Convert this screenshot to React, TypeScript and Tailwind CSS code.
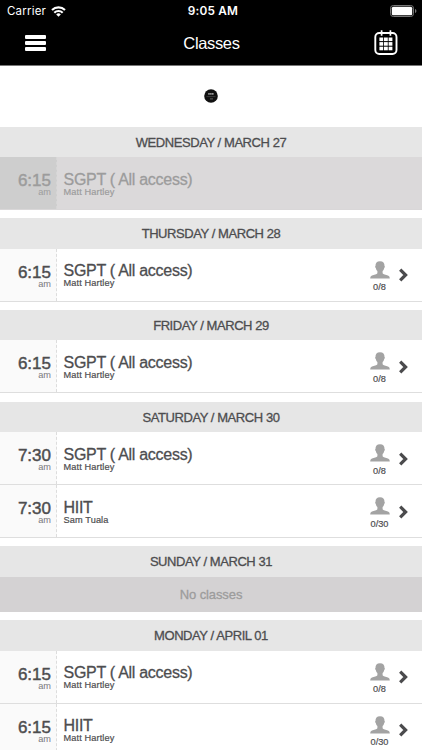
import { clsx } from "clsx";

type ClassItem = {
  time: string;
  name: string;
  coach: string;
  booked?: string;
  past?: boolean;
};

type Day = {
  label: string;
  classes: ClassItem[];
};

const DAYS: Day[] = [
  {
    label: "WEDNESDAY / MARCH 27",
    classes: [{ time: "6:15", name: "SGPT ( All access)", coach: "Matt Hartley", past: true }],
  },
  {
    label: "THURSDAY / MARCH 28",
    classes: [{ time: "6:15", name: "SGPT ( All access)", coach: "Matt Hartley", booked: "0/8" }],
  },
  {
    label: "FRIDAY / MARCH 29",
    classes: [{ time: "6:15", name: "SGPT ( All access)", coach: "Matt Hartley", booked: "0/8" }],
  },
  {
    label: "SATURDAY / MARCH 30",
    classes: [
      { time: "7:30", name: "SGPT ( All access)", coach: "Matt Hartley", booked: "0/8" },
      { time: "7:30", name: "HIIT", coach: "Sam Tuala", booked: "0/30" },
    ],
  },
  { label: "SUNDAY / MARCH 31", classes: [] },
  {
    label: "MONDAY / APRIL 01",
    classes: [
      { time: "6:15", name: "SGPT ( All access)", coach: "Matt Hartley", booked: "0/8" },
      { time: "6:15", name: "HIIT", coach: "Matt Hartley", booked: "0/30" },
    ],
  },
];

function WifiIcon() {
  return (
    <svg width="15" height="11" viewBox="0 0 15 11" fill="none" stroke="#fff" strokeWidth="2.1">
      <path d="M1 4.1a9.2 9.2 0 0 1 13 0" />
      <path d="M3.3 6.7a5.9 5.9 0 0 1 8.4 0" />
      <path d="M7.5 10.7 5.2 8.4a3.3 3.3 0 0 1 4.6 0z" fill="#fff" stroke="none" />
    </svg>
  );
}

function BatteryIcon() {
  return (
    <svg width="27" height="12" viewBox="0 0 27 12">
      <rect x="0.5" y="0.5" width="23" height="11" rx="2.8" fill="none" stroke="#777" />
      <rect x="1.8" y="1.8" width="20.4" height="8.4" rx="1.5" fill="#fff" />
      <path d="M25 4v4c.8-.3 1.4-1.1 1.4-2S25.8 4.3 25 4z" fill="#777" />
    </svg>
  );
}

function CalendarIcon() {
  return (
    <svg width="24" height="26" viewBox="0 0 24 26">
      <rect x="1.3" y="3" width="21.2" height="21" rx="4" fill="none" stroke="#fff" strokeWidth="1.9" />
      <path d="M7.6 0.3v5.4M16.4 0.3v5.4" stroke="#fff" strokeWidth="1.7" />
      {[7.5, 12.1, 16.7].map((y) =>
        [5.4, 10, 14.6].map((x) => (
          <rect key={`${x}-${y}`} x={x} y={y} width="3.8" height="3.6" fill="#fff" />
        ))
      )}
    </svg>
  );
}

function PersonIcon() {
  return (
    <svg width="20" height="18" viewBox="0 0 20 18" fill="#a3a3a3">
      <path d="M10 .3C6.8.3 5.4 2.200 5.500 4.900c-.6.1-.4 1.700.3 2.100.2 1.500.8 2.400 1.600 3.100v2.100c-.5 1.300-3.400 1.600-5.400 2.300C.8 15 .3 15.900.2 17.500h19.600c-.1-1.600-.6-2.500-1.900-3-2-.7-4.800-1-5.300-2.300v-2.100c.8-.7 1.400-1.600 1.600-3.100.7-.4.9-2 .3-2.100C14.600 2.200 13.200.3 10 .3z" />
    </svg>
  );
}

function ChevronIcon() {
  return (
    <svg width="10" height="14" viewBox="0 0 10 14" fill="none" stroke="#4b4b4d" strokeWidth="3.2">
      <path d="M1.2 1.6 6.6 7l-5.4 5.4" />
    </svg>
  );
}

function StudioLogo() {
  return (
    <svg width="14" height="14" viewBox="0 0 14 14">
      <circle cx="7" cy="7" r="6.8" fill="#111" />
      <path d="M4.2 4.9h5.6" stroke="#999" strokeWidth="1.6" strokeDasharray="1.6 .3" />
      <path d="M2.5 7.6h9" stroke="#555" strokeWidth=".6" />
      <path d="M6 9.9h3" stroke="#777" strokeWidth=".8" />
    </svg>
  );
}

function StatusBar() {
  return (
    <div className="grid h-[22px] grid-cols-3 items-center pl-[7px] pr-[5px] font-['Inter',sans-serif] text-[12px] leading-[22px]">
      <div className="flex items-center gap-[5px]">
        <span className="text-[11.5px] tracking-[0.2px]">Carrier</span>
        <WifiIcon />
      </div>
      <span className="pl-[2px] text-center text-[11.8px] font-semibold tracking-[0.2px]">9:05 AM</span>
      <div className="flex justify-end">
        <BatteryIcon />
      </div>
    </div>
  );
}

function NavBar() {
  return (
    <div className="grid h-[42px] grid-cols-3 items-center pl-[25px] pr-6">
      <button className="flex w-[21px] flex-col gap-[2.5px]" aria-label="Menu">
        <span className="h-[3.5px] w-full rounded-[1px] bg-white" />
        <span className="h-[3.5px] w-full rounded-[1px] bg-white" />
        <span className="h-[3.5px] w-full rounded-[1px] bg-white" />
      </button>
      <h1 className="text-center text-[16.5px] leading-5 tracking-[-0.35px]">Classes</h1>
      <button className="flex justify-end" aria-label="Calendar">
        <CalendarIcon />
      </button>
    </div>
  );
}

function ClassRow({ item }: { item: ClassItem }) {
  return (
    <div
      className={clsx(
        "flex h-[53px] border-b",
        item.past ? "border-[#d9d7d8] bg-[#dbd9da] text-[#9c9c9c]" : "border-[#dedede] bg-white text-[#4d4d4f]"
      )}
    >
      <div
        className={clsx(
          "flex w-[57px] shrink-0 flex-col items-end border-r border-dashed pr-[5px] pt-[15px]",
          item.past ? "border-[#d6d6d6] bg-[#cecece]" : "border-[#dddddd] bg-[#fafafa]"
        )}
      >
        <span className="text-[17px] leading-[17px] [-webkit-text-stroke:0.45px_currentColor]">{item.time}</span>
        <span className={clsx("text-[9.2px] leading-[7px]", !item.past && "text-[#77777a]")}>am</span>
      </div>
      <div className="flex flex-1 flex-col pl-[6.5px] pt-[13.5px]">
        <span className="text-[16px] leading-[17px] tracking-[-0.28px] [-webkit-text-stroke:0.3px_currentColor]">
          {item.name}
        </span>
        <span className="text-[9.2px] leading-[9px] tracking-[0.12px] [-webkit-text-stroke:0.2px_currentColor]">
          {item.coach}
        </span>
      </div>
      {item.booked && (
        <div className="flex pr-[13px]">
          <div className="flex w-[33px] flex-col items-center pt-[12px]">
            <PersonIcon />
            <span className="mt-[4.5px] text-[9.2px] leading-[9px] [-webkit-text-stroke:0.2px_currentColor]">
              {item.booked}
            </span>
          </div>
          <div className="flex items-center pl-[3px] pt-px">
            <ChevronIcon />
          </div>
        </div>
      )}
    </div>
  );
}

function DaySection({ day }: { day: Day }) {
  return (
    <section>
      <h2 className="h-[30.5px] bg-[#e6e6e6] text-center text-[13px] leading-[31px] tracking-[-0.43px] text-[#4d4d4f] [-webkit-text-stroke:0.3px_currentColor]">
        {day.label}
      </h2>
      {day.classes.length === 0 ? (
        <p className="h-[35.2px] bg-[#d4d2d3] text-center text-[13px] leading-[36px] tracking-[-0.1px] text-[#9c9c9c] [-webkit-text-stroke:0.3px_currentColor]">
          No classes
        </p>
      ) : (
        day.classes.map((item, i) => <ClassRow key={i} item={item} />)
      )}
    </section>
  );
}

export default function App() {
  return (
    <div className="h-[750px] w-full overflow-hidden bg-white font-['Liberation_Sans',Arial,sans-serif]">
      <header className="h-[66px] border-b border-[#777] bg-black text-white">
        <StatusBar />
        <NavBar />
      </header>
      <div className="flex h-[60.5px] items-center justify-center">
        <StudioLogo />
      </div>
      <main className="flex flex-col gap-[8.2px]">
        {DAYS.map((day) => (
          <DaySection key={day.label} day={day} />
        ))}
      </main>
    </div>
  );
}
